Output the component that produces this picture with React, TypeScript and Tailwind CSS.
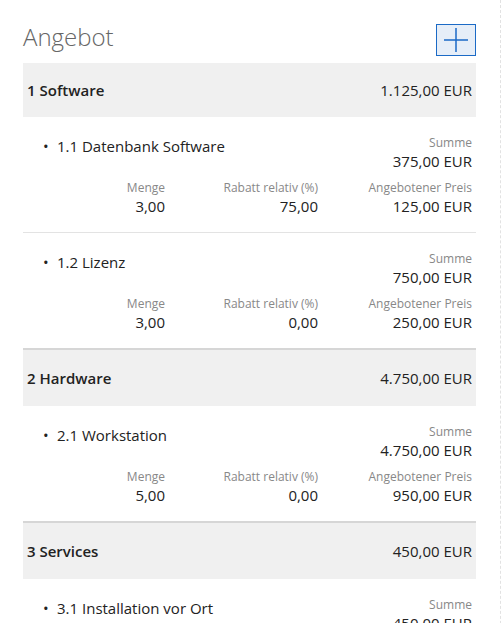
type Item = {
  title: string;
  summe: string;
  menge: string;
  rabatt: string;
  preis: string;
};

type Group = {
  title: string;
  total: string;
  items: Item[];
};

const groups: Group[] = [
  {
    title: '1 Software',
    total: '1.125,00 EUR',
    items: [
      { title: '1.1 Datenbank Software', summe: '375,00 EUR', menge: '3,00', rabatt: '75,00', preis: '125,00 EUR' },
      { title: '1.2 Lizenz', summe: '750,00 EUR', menge: '3,00', rabatt: '0,00', preis: '250,00 EUR' },
    ],
  },
  {
    title: '2 Hardware',
    total: '4.750,00 EUR',
    items: [
      { title: '2.1 Workstation', summe: '4.750,00 EUR', menge: '5,00', rabatt: '0,00', preis: '950,00 EUR' },
    ],
  },
  {
    title: '3 Services',
    total: '450,00 EUR',
    items: [
      { title: '3.1 Installation vor Ort', summe: '450,00 EUR', menge: '1,00', rabatt: '0,00', preis: '450,00 EUR' },
    ],
  },
];

function Field({ label, value }: { label: string; value: string }) {
  return (
    <div className="text-right">
      <div className="text-[12px] leading-[16px] text-[#888]">{label}</div>
      <div className="text-[15px] leading-[20px] text-[#222]">{value}</div>
    </div>
  );
}

function ItemRow({ item, last }: { item: Item; last: boolean }) {
  return (
    <div className={`pt-[18px] pb-[16px] pr-[4px] ${last ? '' : 'border-b border-[#e3e3e3]'}`}>
      <div className="flex items-start justify-between">
        <div className="mt-[1px] flex pl-[20px] text-[15px] leading-[20px] text-[#222]">
          <span className="w-[14px]">•</span>
          <span>{item.title}</span>
        </div>
        <Field label="Summe" value={item.summe} />
      </div>
      <div className="mt-[9px] grid grid-cols-[1fr_153px_154px]">
        <Field label="Menge" value={item.menge} />
        <Field label="Rabatt relativ (%)" value={item.rabatt} />
        <Field label="Angebotener Preis" value={item.preis} />
      </div>
    </div>
  );
}

export default function App() {
  return (
    <div
      className="min-h-screen overflow-hidden border-r border-dashed border-[#e2e2e2] bg-white pt-[24px] pl-[23px] pr-[24px]"
      style={{ fontFamily: '"Open Sans", "Noto Sans", sans-serif' }}
    >
      <div className="flex items-start justify-between">
        <h1 className="text-[24px] leading-[26px] font-light text-[#666]">Angebot</h1>
        <button className="flex h-[32px] w-[40px] items-center justify-center border border-[#1b6ac6] bg-[#e6eef8]">
          <svg width="24" height="24" viewBox="0 0 24 24">
            <path d="M0 12H24M12 0V24" stroke="#1b6ac6" strokeWidth="1.5" />
          </svg>
        </button>
      </div>
      <div className="mt-[7px]">
        {groups.map((g, gi) => (
          <div key={g.title}>
            <div
              className={`flex items-center justify-between bg-[#f0f0f0] px-[4px] text-[15px] text-[#222] ${
                gi === 0 ? 'h-[54px]' : 'h-[58px] border-t-2 border-[#d6d6d6]'
              }`}
            >
              <span className="font-semibold">{g.title}</span>
              <span>{g.total}</span>
            </div>
            {g.items.map((it, i) => (
              <ItemRow key={it.title} item={it} last={i === g.items.length - 1} />
            ))}
          </div>
        ))}
      </div>
    </div>
  );
}
